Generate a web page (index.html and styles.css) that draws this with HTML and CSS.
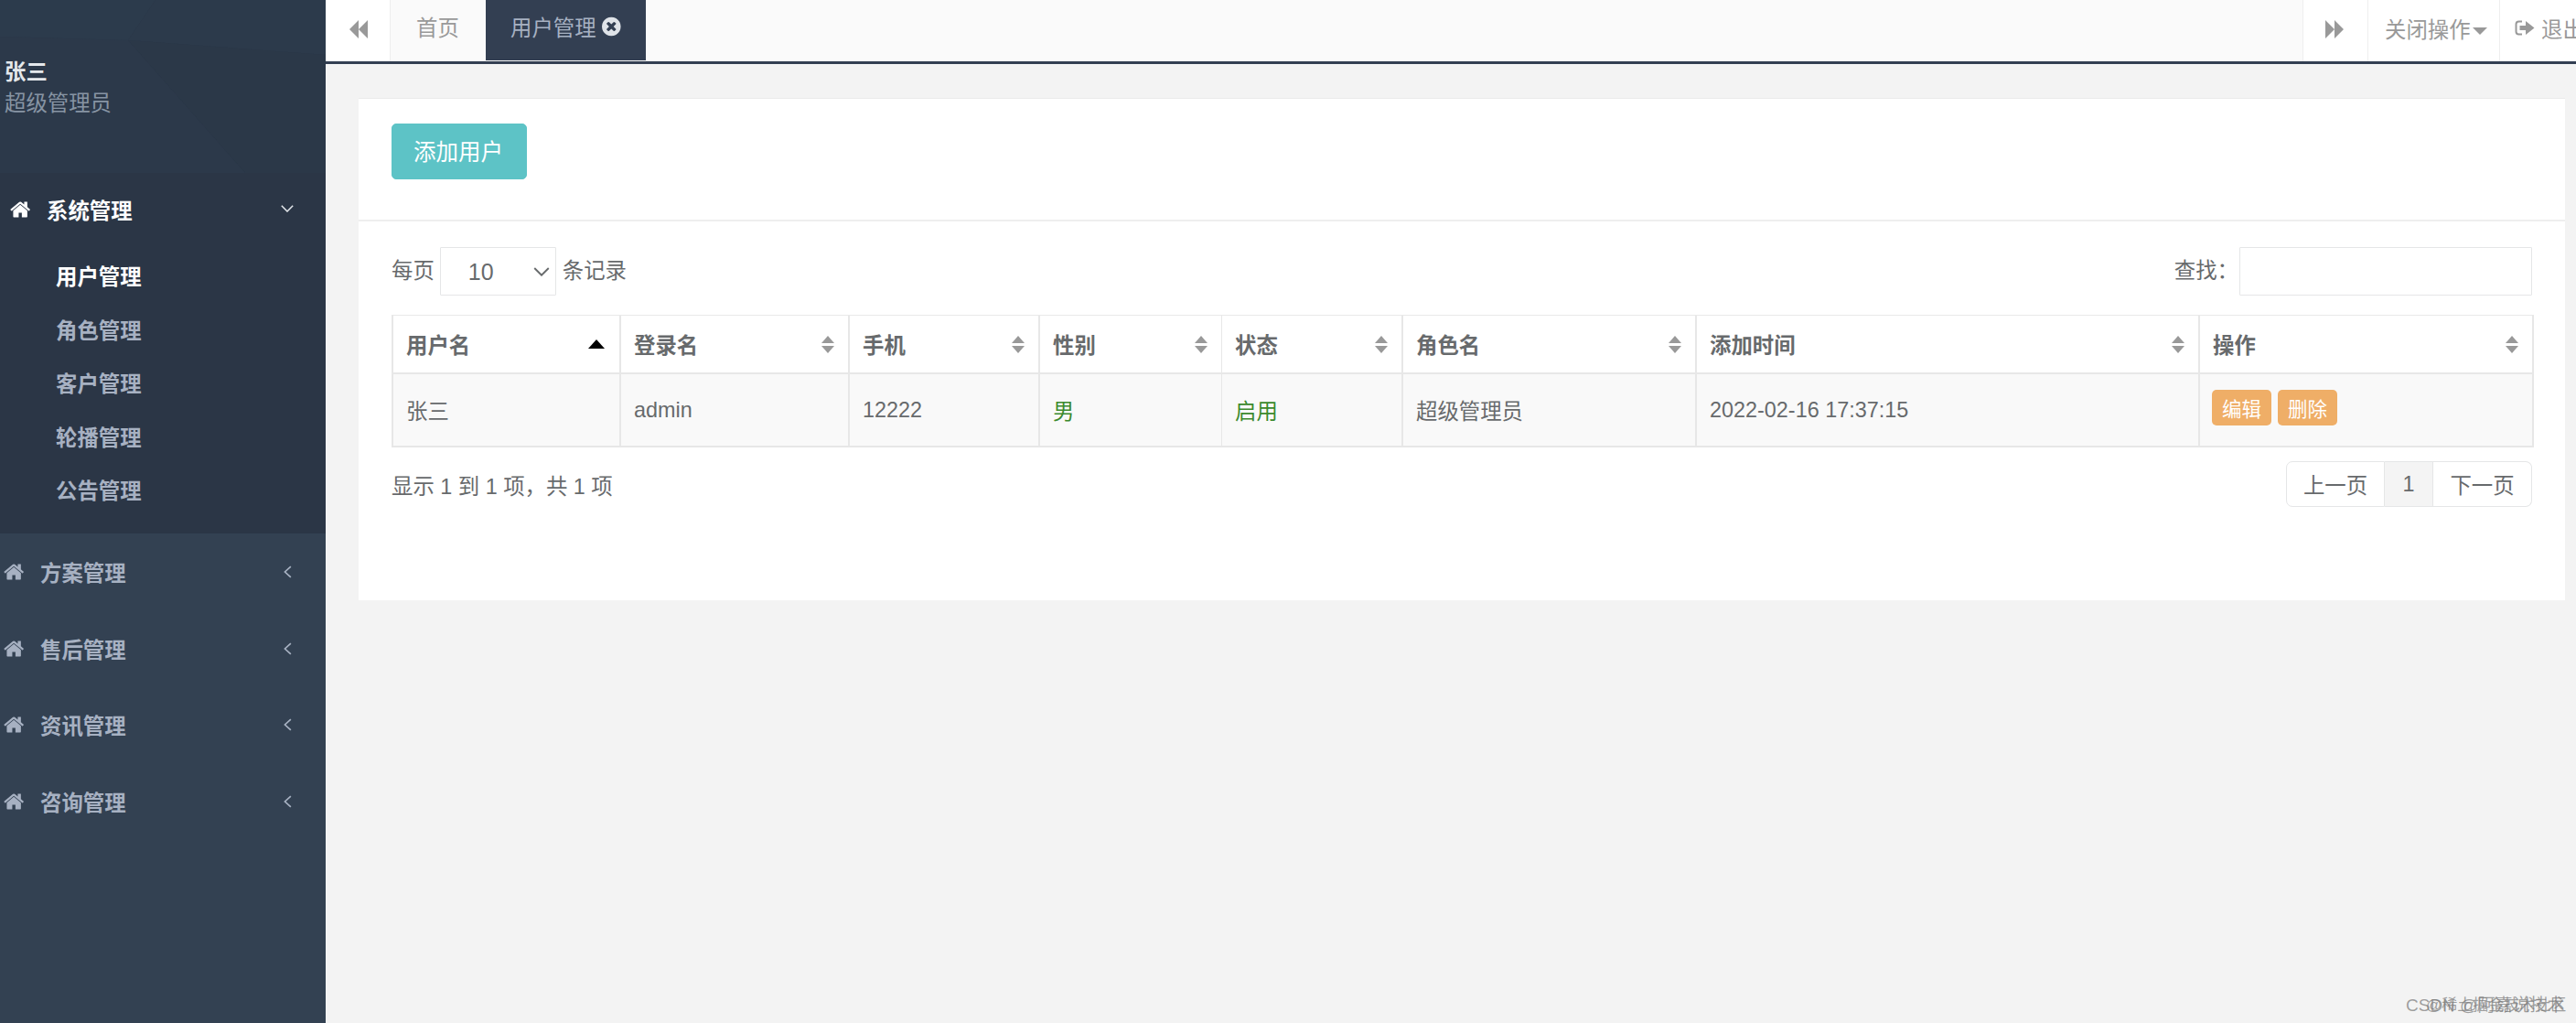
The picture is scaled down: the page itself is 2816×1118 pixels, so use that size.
FILE: index.html
```html
<!DOCTYPE html>
<html lang="zh-CN">
<head>
<meta charset="utf-8">
<title>用户管理</title>
<link rel="stylesheet" href="styles.css">
</head>
<body>
<svg class="defs" width="0" height="0">
  <symbol id="home" viewBox="0 0 1792 1792"><path d="M1408 992v480q0 26-19 45t-45 19h-384v-384h-256v384h-384q-26 0-45-19t-19-45v-480q0-1 .5-3t.5-3l575-474 575 474q1 2 1 6zm223-69l-62 74q-8 9-21 11h-3q-13 0-21-7l-692-577-692 577q-12 8-24 7-13-2-21-11l-62-74q-8-10-7-23.500t11-21.500l719-599q32-26 76-26t76 26l244 204v-195q0-14 9-23t23-9h192q14 0 23 9t9 23v408l219 182q10 8 11 21.500t-7 23.500z"/></symbol>
  <symbol id="left" viewBox="0 0 8 12"><path d="M7 .7 1.3 6 7 11.300" fill="none" stroke="currentColor" stroke-width="1.500"/></symbol>
  <symbol id="down" viewBox="0 0 14 8"><path d="M.8.800 7 7l6.200-6.200" fill="none" stroke="currentColor" stroke-width="1.500"/></symbol>
</svg>

<div class="app">
  <aside class="sidebar">
    <div class="profile">
      <svg class="profile-bg" viewBox="0 0 356 189" preserveAspectRatio="none">
        <polygon points="0,0 170,0 140,44 0,40" fill="#2c3b4c"/>
        <polygon points="170,0 356,0 356,60 140,44" fill="#2c3a4b"/>
        <polygon points="140,44 356,60 356,189 268,189" fill="#2b3848"/>
        <polygon points="0,40 140,44 268,189 0,189" fill="#2c394a"/>
      </svg>
      <div class="profile-name">张三</div>
      <div class="profile-role">超级管理员</div>
    </div>
    <nav class="nav">
      <section class="group group-open">
        <a class="group-head group-head-open">
          <svg class="home-icon"><use href="#home"/></svg>
          <span>系统管理</span>
          <svg class="chevron-down"><use href="#down"/></svg>
        </a>
        <ul class="subnav">
          <li class="subnav-item subnav-active">用户管理</li>
          <li class="subnav-item">角色管理</li>
          <li class="subnav-item">客户管理</li>
          <li class="subnav-item">轮播管理</li>
          <li class="subnav-item">公告管理</li>
        </ul>
      </section>
      <a class="group-head"><svg class="home-icon"><use href="#home"/></svg><span>方案管理</span><svg class="chevron-left"><use href="#left"/></svg></a>
      <a class="group-head"><svg class="home-icon"><use href="#home"/></svg><span>售后管理</span><svg class="chevron-left"><use href="#left"/></svg></a>
      <a class="group-head"><svg class="home-icon"><use href="#home"/></svg><span>资讯管理</span><svg class="chevron-left"><use href="#left"/></svg></a>
      <a class="group-head"><svg class="home-icon"><use href="#home"/></svg><span>咨询管理</span><svg class="chevron-left"><use href="#left"/></svg></a>
    </nav>
  </aside>

  <main class="main">
    <header class="topbar">
      <button class="tool tool-back">
        <svg class="tool-icon" viewBox="0 0 20 20"><path d="M10 0v20L0 10zM20 0v20L10 10z"/></svg>
      </button>
      <div class="tabs">
        <a class="tab tab-home">首页</a>
        <a class="tab tab-active">用户管理
          <svg class="tab-close" viewBox="0 0 1792 1792"><path d="M1149 1122q0-26-19-45l-181-181 181-181q19-19 19-45 0-27-19-46l-90-90q-19-19-46-19-26 0-45 19l-181 181-181-181q-19-19-45-19-27 0-46 19l-90 90q-19 19-19 46 0 26 19 45l181 181-181 181q-19 19-19 45 0 27 19 46l90 90q19 19 46 19 26 0 45-19l181-181 181 181q19 19 45 19 27 0 46-19l90-90q19-19 19-46zm387-226q0 209-103 385.500t-279.500 279.500-385.500 103-385.500-103-279.500-279.500-103-385.500 103-385.500 279.500-279.500 385.500-103 385.500 103 279.500 279.500 103 385.500z"/></svg>
        </a>
      </div>
      <button class="tool tool-forward">
        <svg class="tool-icon" viewBox="0 0 20 20"><path d="M0 0v20l10-10zM10 0v20l10-10z"/></svg>
      </button>
      <button class="tool tool-close">关闭操作<span class="caret"></span></button>
      <button class="tool tool-exit">
        <svg class="exit-icon" viewBox="0 0 22 17"><path d="M8 1.500H4.500Q1.500 1.500 1.500 4.500v8q0 3 3 3H8" fill="none" stroke="currentColor" stroke-width="2"/><path d="M5.500 6H12V1l9.500 7.500L12 16v-5H5.500z"/></svg>
        <span>退出</span>
      </button>
    </header>

    <div class="content">
      <div class="card">
        <div class="card-toolbar">
          <button class="btn-add">添加用户</button>
        </div>
        <div class="card-body">
          <div class="filters">
            <label class="length"><span class="filter-text">每页</span>
              <span class="select-wrap">
                <select class="select"><option>10</option></select>
                <svg class="select-arrow"><use href="#down"/></svg>
              </span>
            <span class="filter-text">条记录</span></label>
            <label class="search"><span class="filter-text">查找：</span><input class="search-input" type="text"></label>
          </div>

          <table class="table">
            <colgroup>
              <col class="c1"><col class="c2"><col class="c3"><col class="c4"><col class="c5"><col class="c6"><col class="c7"><col class="c8">
            </colgroup>
            <thead>
              <tr>
                <th><div class="th-in">用户名<span class="sort-asc"></span></div></th>
                <th><div class="th-in">登录名<span class="sort"></span></div></th>
                <th><div class="th-in">手机<span class="sort"></span></div></th>
                <th><div class="th-in">性别<span class="sort"></span></div></th>
                <th class="thin"><div class="th-in">状态<span class="sort"></span></div></th>
                <th><div class="th-in">角色名<span class="sort"></span></div></th>
                <th><div class="th-in">添加时间<span class="sort"></span></div></th>
                <th><div class="th-in">操作<span class="sort"></span></div></th>
              </tr>
            </thead>
            <tbody>
              <tr>
                <td>张三</td>
                <td>admin</td>
                <td>12222</td>
                <td class="ok">男</td>
                <td class="ok thin">启用</td>
                <td>超级管理员</td>
                <td>2022-02-16 17:37:15</td>
                <td class="actions"><button class="btn-xs">编辑</button><button class="btn-xs">删除</button></td>
              </tr>
            </tbody>
          </table>

          <div class="table-foot">
            <div class="info">显示 1 到 1 项，共 1 项</div>
            <div class="pager">
              <a class="page page-prev">上一页</a>
              <a class="page page-num">1</a>
              <a class="page page-next">下一页</a>
            </div>
          </div>
        </div>
      </div>
    </div>
  </main>
</div>
<div class="watermark"><span>CSDN @阿嘉说技术</span><span class="watermark-over">@稀土掘金技术社区</span></div>
</body>
</html>
```

FILE: styles.css
```css
* { box-sizing: border-box; }
html, body { margin: 0; height: 100%; overflow: hidden; }
body {
  font-family: "Liberation Sans", "Noto Sans CJK SC", sans-serif;
  font-size: 23.400px;
  color: #676a6c;
  background: #f3f3f3;
}
.defs { position: absolute; }
.app { display: flex; height: 1118px; width: 2816px; }

/* sidebar */
.sidebar { width: 356px; flex: none; background: #334152; color: #a7b1c2; font-weight: 700; }
.profile {
  position: relative;
  height: 189px;
  background: #2b3748;
  padding: 62px 0 0 5px;
  overflow: hidden;
}
.profile-bg { position: absolute; inset: 0; width: 100%; height: 100%; }
.profile-name, .profile-role { position: relative; line-height: 34px; }
.profile-name { color: #e4e8ec; }
.profile-role { color: #8794a3; font-weight: 400; }
.group-open { background: #2b3646; padding-bottom: 18px; }
.group-head {
  display: flex;
  align-items: center;
  height: 83.700px;
  padding-left: 4px;
}
.group-head-open { color: #fff; padding: 0 0 3px 11px; height: 83px; }
.home-icon { width: 24px; height: 24px; margin-right: 16px; fill: currentColor; flex: none; }
.chevron-down { width: 14px; height: 8px; margin-left: 162px; margin-top: -2px; color: #e4e8ec; }
.chevron-left { width: 9px; height: 14px; margin-left: 172px; }
.subnav { list-style: none; margin: 0; padding: 0; }
.subnav-item { height: 58.600px; line-height: 62px; padding-left: 61px; }
.subnav-active { color: #fff; }

/* main */
.main { flex: 1; min-width: 0; overflow: hidden; display: flex; flex-direction: column; }
.topbar {
  display: flex;
  height: 70px;
  flex: none;
  background: #fff;
  border-bottom: 3px solid #333f52;
  color: #999;
}
.tool {
  font: inherit;
  color: inherit;
  background: #fff;
  border: 0;
  border-left: 1px solid #eee;
  padding: 0;
  height: 67px;
  display: flex;
  align-items: center;
  flex: none;
}
.tool-icon { width: 20px; height: 20px; fill: #999; margin-bottom: 3px; }
.tool-back { width: 71px; border-left: 0; border-right: 1px solid #eee; padding-left: 26px; }
.tabs { flex: 1; display: flex; background: #fafafa; }
.tab { height: 66px; display: flex; align-items: center; padding-bottom: 8px; }
.tab-home { width: 104px; padding-left: 28px; color: #999; }
.tab-active { width: 175px; padding-left: 27px; background: #333f52; color: #a7b1c2; }
.tab-close { width: 24px; height: 24px; margin-left: 6px; fill: #dfe3e8; }
.tool-forward { width: 71px; padding-left: 24px; }
.tool-close { width: 144px; padding: 0 0 5px 18px; }
.caret {
  width: 0;
  height: 0;
  margin: 5px 0 0 2px;
  border: 8px solid transparent;
  border-top-color: #999;
  border-bottom: 0;
}
.tool-exit { width: 84px; padding: 0 0 6px 16px; justify-content: flex-start; overflow: visible; }
.tool-exit span { white-space: nowrap; margin-left: 7px; }
.exit-icon { width: 22px; height: 17px; fill: currentColor; flex: none; }

.content { flex: 1; padding: 37px 12px 0 36px; }
.card { background: #fff; border-top: 1px solid #eaeaea; height: 549px; }
.card-toolbar { height: 134px; padding-top: 27px; border-bottom: 2px solid #eee; }
.card-toolbar, .card-body { padding-left: 36px; padding-right: 36px; }
.btn-add {
  font: inherit;
  font-size: 24.500px;
  width: 148px;
  height: 61px;
  padding: 0 2px 3px 0;
  color: #fff;
  background: #5dc3c6;
  border: 1px solid #5dc3c6;
  border-radius: 5px;
}
.card-body { padding-top: 28px; }
.filters { display: flex; justify-content: space-between; align-items: center; height: 53px; }
.length, .search { display: flex; align-items: center; }
.filter-text { margin-top: -5px; }
.select-wrap { position: relative; margin: 0 7px 0 6px; display: block; height: 53px; }
.select {
  appearance: none;
  width: 127px;
  height: 53px;
  font: inherit;
  font-size: 25px;
  color: #676a6c;
  padding-left: 30px;
  background: #fff;
  border: 1px solid #e5e6e7;
  border-radius: 1px;
}
.select-arrow { position: absolute; right: 7px; top: 22px; width: 18px; height: 10px; color: #676a6c; }
.search-input { width: 320px; height: 53px; border: 1px solid #e5e6e7; border-radius: 1px; background: #fff; margin-left: 1px; }

.table {
  width: 2342px;
  table-layout: fixed;
  border-collapse: separate;
  border-spacing: 0;
  margin-top: 21px;
  border-top: 1px solid #e9e9e9;
  border-left: 2px solid #e7e7e7;
  border-right: 2px solid #e7e7e7;
  border-bottom: 2px solid #e7e7e7;
}
.c1 { width: 247px; } .c2 { width: 250px; } .c3 { width: 208px; } .c4 { width: 200px; }
.c5 { width: 197px; } .c6 { width: 321px; } .c7 { width: 550px; } .c8 { width: 365px; }
th, td { padding: 0 14px; border-left: 2px solid #e7e7e7; text-align: left; }
th:first-child, td:first-child { border-left: 0; }
th.thin, td.thin { border-left-width: 1px; }
th { height: 64px; border-bottom: 2px solid #e7e7e7; font-weight: 700; }
td { height: 78px; background: #f9f9f9; }
.th-in { display: flex; justify-content: space-between; align-items: center; }
.sort { width: 15px; height: 19px; display: flex; flex-direction: column; justify-content: space-between; }
.sort::before, .sort::after { content: ""; width: 0; height: 0; border-left: 7.500px solid transparent; border-right: 7.500px solid transparent; }
.sort::before { border-bottom: 8px solid #999; }
.sort::after { border-top: 8px solid #999; }
.sort-asc { width: 0; height: 0; margin-right: 2px; border-left: 9px solid transparent; border-right: 9px solid transparent; border-bottom: 10px solid #000; }
.ok { color: #3c8a2e; }
.actions { padding: 0 0 0 13px; }
.btn-xs {
  font: inherit;
  font-size: 21.500px;
  width: 65px;
  height: 39px;
  padding: 0;
  margin-right: 7px;
  color: #fff;
  background: #efae67;
  border: 0;
  border-radius: 5px;
  vertical-align: middle;
  position: relative;
  top: -3px;
}
.table-foot { display: flex; justify-content: space-between; align-items: center; margin-top: 15px; }
.info { padding-top: 2px; }
.pager { display: flex; height: 50px; }
.page { display: flex; align-items: center; justify-content: center; border: 1px solid #e5e6e7; background: #fff; }
.page-prev { width: 108px; border-radius: 7px 0 0 7px; }
.page-num { width: 53px; border-left: 0; background: #f4f4f4; }
.page-next { width: 108px; border-left: 0; border-radius: 0 7px 7px 0; }

.watermark { position: absolute; left: 2630px; top: 1087px; font-size: 19px; line-height: 24px; color: rgba(120, 120, 120, .7); white-space: nowrap; }
.watermark-over { position: absolute; left: 22px; top: 0; font-size: 17px; }
```
